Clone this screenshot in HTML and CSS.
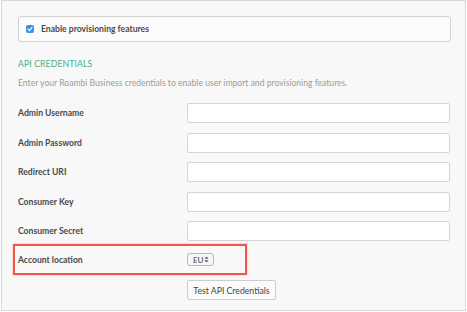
FILE: index.html
```html
<!DOCTYPE html>
<html>
<head>
<meta charset="utf-8">
<link rel="stylesheet" href="styles.css">
</head>
<body>
<div class="frame">
  <div class="enable-panel">
    <span class="checkbox">
      <svg width="8" height="8" viewBox="0 0 8 8"><path d="M2 4.2 L3.4 5.6 L6 2.4" fill="none" stroke="#fff" stroke-width="1.2" stroke-linecap="round" stroke-linejoin="round"/></svg>
    </span>
    <span class="enable-label">Enable provisioning features</span>
  </div>
  <h2 class="section-title">API CREDENTIALS</h2>
  <p class="section-desc">Enter your Roambi Business credentials to enable user import and provisioning features.</p>
  <div class="form">
    <label class="field-label">Admin Username</label>
    <div class="text-input"></div>
    <label class="field-label">Admin Password</label>
    <div class="text-input"></div>
    <label class="field-label">Redirect URI</label>
    <div class="text-input"></div>
    <label class="field-label">Consumer Key</label>
    <div class="text-input"></div>
    <label class="field-label">Consumer Secret</label>
    <div class="text-input"></div>
    <div class="account-row">
      <label class="field-label">Account location</label>
      <span class="select">EU
        <svg width="5" height="7" viewBox="0 0 5 7"><path d="M0.5 2.8 L2.5 0.6 L4.5 2.8 Z M0.5 4.2 L2.5 6.4 L4.5 4.2 Z" fill="#555"/></svg>
      </span>
      <span class="highlight"></span>
    </div>
    <div class="button-row">
      <span class="button">Test API Credentials</span>
    </div>
  </div>
</div>
</body>
</html>
```
FILE: styles.css
```css
* { box-sizing: border-box; }
html, body { margin: 0; padding: 0; background: #ffffff; }
body { font-family: Lato, "Open Sans", sans-serif; }

.frame {
  margin-left: 1px;
  width: 465px;
  height: 311px;
  border: 1px solid #d8d8d8;
  background: #f8f8f8;
  padding: 15px 0 0 16px;
  display: flex;
  flex-direction: column;
}

.enable-panel {
  width: 433px;
  height: 26px;
  border: 1px solid #d2d2d2;
  border-radius: 3px;
  background: #fbfbfb;
  display: flex;
  align-items: center;
  padding-left: 7px;
  gap: 7px;
}

.checkbox {
  width: 8px;
  height: 8px;
  border-radius: 2px;
  background: #3f8ee8;
  display: flex;
  align-items: center;
  justify-content: center;
}
.checkbox svg { display: block; }

.enable-label {
  font-size: 8.6px;
  font-weight: 700;
  color: #4a4a4a;
  line-height: 10px;
}

.section-title {
  margin: 17px 0 0 0;
  font-size: 8.7px;
  line-height: 10px;
  font-weight: 400;
  color: #45b08a;
  letter-spacing: 0.1px;
}

.section-desc {
  margin: 9px 0 0 0;
  font-size: 8.6px;
  line-height: 10px;
  color: #9b9b9b;
}

.form {
  margin: 15px 0 0 0;
  display: grid;
  grid-template-columns: 169px 263px;
  row-gap: 9.5px;
  align-items: center;
}

.field-label {
  font-size: 8.6px;
  font-weight: 700;
  color: #4a4a4a;
  line-height: 10px;
}

.text-input {
  height: 20px;
  border: 1px solid #d4d4d4;
  border-radius: 2px;
  background: #ffffff;
}

.account-row {
  grid-column: 1 / 3;
  display: grid;
  grid-template-columns: 169px 263px;
  align-items: center;
  height: 18px;
  position: relative;
}

.select {
  justify-self: start;
  width: 27px;
  height: 13px;
  border: 1px solid #b9b9b9;
  border-radius: 3px;
  background: #f6f6f6;
  font-size: 8px;
  color: #444;
  display: flex;
  align-items: center;
  justify-content: space-between;
  padding: 0 4px 0 5px;
  line-height: 10px;
}
.select svg { display: block; }

.highlight {
  position: absolute;
  left: -5px;
  top: -7px;
  width: 234px;
  height: 31px;
  border: 2.5px solid #f0564c;
  box-shadow: 0 0 2px rgba(240, 86, 76, 0.5);
}

.button-row {
  grid-column: 2 / 3;
  margin-top: 2px;
}

.button {
  display: flex;
  align-items: center;
  justify-content: center;
  width: 89px;
  height: 20px;
  border: 1px solid #cdcdcd;
  border-radius: 2px;
  background: #fbfbfb;
  font-size: 8.7px;
  color: #444;
}
```
